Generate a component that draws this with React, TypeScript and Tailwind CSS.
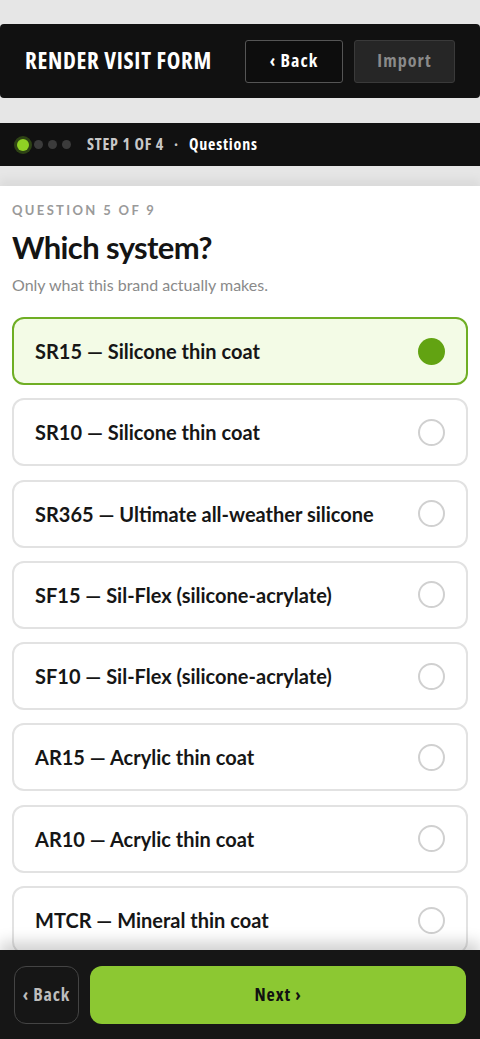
const options = [
  "SR15 — Silicone thin coat",
  "SR10 — Silicone thin coat",
  "SR365 — Ultimate all-weather silicone",
  "SF15 — Sil-Flex (silicone-acrylate)",
  "SF10 — Sil-Flex (silicone-acrylate)",
  "AR15 — Acrylic thin coat",
  "AR10 — Acrylic thin coat",
  "MTCR — Mineral thin coat",
];

const display = "font-['Open_Sans',sans-serif] font-stretch-[75%] font-bold whitespace-nowrap";

export default function App() {
  const selected = 0;

  return (
    <div className="flex h-[1039px] w-[480px] flex-col overflow-hidden bg-[#e6e6e6] font-['Lato',sans-serif]">
      {/* Header */}
      <div className="mt-6 flex h-[74px] items-center justify-between rounded-[4px] bg-[#111111] pl-[25px] pr-[25px]">
        <h1 className={`${display} -mt-[2px] text-[23px] tracking-[0.03em] text-white`}>RENDER VISIT FORM</h1>
        <div className="flex gap-[11px]">
          <button className={`${display} h-[43px] w-[98px] rounded-[3px] border border-[#555] bg-[#0d0d0d] pb-[2px] text-[18px] tracking-[0.06em] text-white`}>
            ‹ Back
          </button>
          <button className={`${display} h-[43px] w-[101px] rounded-[3px] border border-[#3a3a3a] bg-[#262626] pb-[2px] text-[18px] tracking-[0.06em] text-[#8a8a8a]`}>
            Import
          </button>
        </div>
      </div>

      {/* Step bar */}
      <div className="mt-[25px] flex h-[43px] items-center gap-[16px] bg-[#111111] pl-[17px]">
        <div className="flex items-center gap-[5px]">
          <span className="h-3 w-3 rounded-full bg-[#8fd124] shadow-[0_0_0_3px_rgba(100,160,30,0.35)]" />
          <span className="h-[9px] w-[9px] rounded-full bg-[#3b3b3b]" />
          <span className="h-[9px] w-[9px] rounded-full bg-[#3b3b3b]" />
          <span className="h-[9px] w-[9px] rounded-full bg-[#3b3b3b]" />
        </div>
        <div className={`${display} -mt-[2px] flex items-center gap-[10px] text-[16px] tracking-[0.05em]`}>
          <span className="text-[#c8c8c8]">STEP 1 OF 4</span>
          <span className="text-[#c8c8c8]">·</span>
          <span className="text-white">Questions</span>
        </div>
      </div>

      {/* Content */}
      <div className="mt-5 flex-1 overflow-hidden bg-white px-3 pt-[15px] shadow-[0_-6px_10px_rgba(0,0,0,0.06)]">
        <div className="text-[13px] leading-[18px] font-bold tracking-[0.18em] text-[#9a9a9a]">QUESTION 5 OF 9</div>
        <h2 className="mt-[10px] text-[31px] leading-[36px] font-bold tracking-[-0.02em] text-[#141414]">Which system?</h2>
        <p className="mt-[10px] text-[16px] leading-[20px] text-[#8a8a8a]">Only what this brand actually makes.</p>

        <div className="mt-[22px] flex flex-col gap-[13.3px]">
          {options.map((label, i) => {
            const active = i === selected;
            return (
              <div
                key={label}
                className={`flex h-[68px] shrink-0 items-center justify-between rounded-[12px] pl-[21px] pr-[21px] ${
                  active ? "border-2 border-[#6fae24] bg-[#f3fbe6]" : "border-2 border-[#e2e2e2] bg-white"
                }`}
              >
                <span className="text-[20px] font-bold text-[#161616]">{label}</span>
                {active ? (
                  <span className="h-[27px] w-[27px] rounded-full bg-[#62a312]" />
                ) : (
                  <span className="h-[27px] w-[27px] rounded-full border-2 border-[#d0d0d0]" />
                )}
              </div>
            );
          })}
        </div>
      </div>

      {/* Bottom bar */}
      <div className="relative flex h-[89px] shrink-0 gap-[11px] bg-[#161616] px-[14px] pt-4 shadow-[0_-8px_14px_rgba(0,0,0,0.18)]">
        <button className={`${display} h-[58px] w-[65px] rounded-[12px] border border-[#444] pb-[2px] text-[18px] tracking-[0.05em] text-[#bdbdbd]`}>
          ‹ Back
        </button>
        <button className={`${display} h-[58px] flex-1 rounded-[12px] bg-[#8cc832] pb-[2px] text-[18px] tracking-[0.05em] text-[#111]`}>
          Next ›
        </button>
      </div>
    </div>
  );
}
